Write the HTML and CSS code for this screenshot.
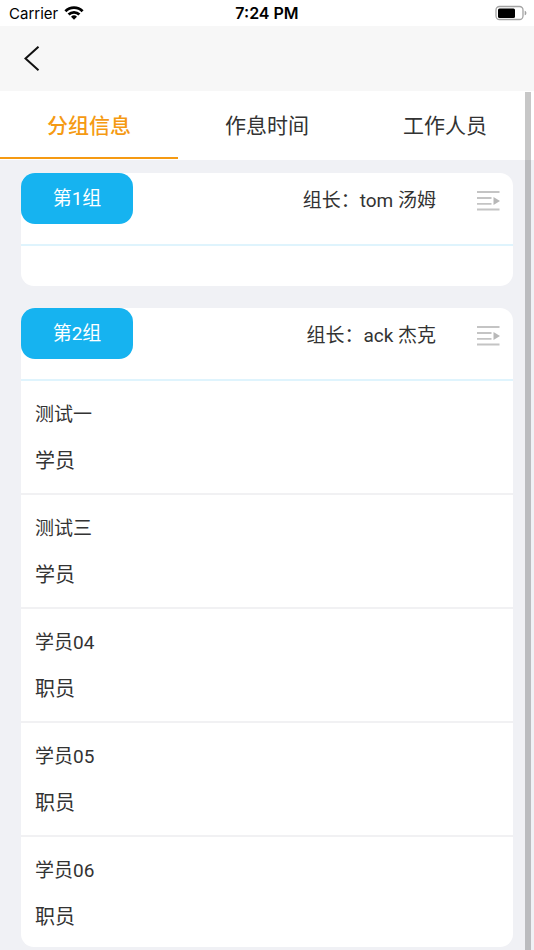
FILE: index.html
```html
<!DOCTYPE html>
<html lang="zh-CN">
<head>
    <meta charset="UTF-8" />
    <meta name="viewport" content="width=device-width, initial-scale=1.0"/>
    <title>分组信息</title>
    <link rel="stylesheet" href="styles.css">
</head>
<body>
    <!-- Status bar -->
    <div class="status-bar">
        <div class="carrier">
            <span>Carrier</span>
            <svg width="20" height="14" viewBox="0 0 20 14" fill="none" stroke="#000" stroke-width="2.8">
                <path d="M1.4 5.2a12.2 12.2 0 0 1 17.2 0"/>
                <path d="M4.6 8.6a7.6 7.6 0 0 1 10.8 0"/>
                <path d="M10 13.8l-3-3a4.3 4.3 0 0 1 6 0z" fill="#000" stroke="none"/>
            </svg>
        </div>
        <div class="time">7:24 PM</div>
        <div class="battery">
            <svg width="32" height="16" viewBox="0 0 32 16">
                <rect x="1" y="1.500" width="27" height="13" rx="3.500" fill="#fff" stroke="#a3a3a3" stroke-width="1.3"/>
                <rect x="3" y="3.500" width="17" height="9.500" rx="1.500" fill="#000"/>
                <path d="M29.700 5.700c1.200.4 1.700 1.200 1.700 2.300s-.5 1.900-1.700 2.300z" fill="#a3a3a3"/>
            </svg>
        </div>
    </div>

    <!-- Navigation -->
    <header class="nav-bar">
        <button type="button" class="back" aria-label="返回">
            <svg width="18" height="26" viewBox="0 0 18 26" fill="none" stroke="#111" stroke-width="2">
                <path d="M14.500.7L1.500 12.500l13 11.800"/>
            </svg>
        </button>
    </header>

    <nav class="tabs">
        <button type="button" class="tab active">分组信息</button>
        <button type="button" class="tab">作息时间</button>
        <button type="button" class="tab">工作人员</button>
    </nav>

    <main class="groups">
        <!-- Group 1 -->
        <section class="group">
            <div class="group-head">
                <h2 class="badge">第1组</h2>
                <p class="leader">组长：tom 汤姆</p>
                <button type="button" class="toggle" aria-label="展开">
                    <svg width="24" height="20" viewBox="0 0 24 20" stroke="#c4c4c4" stroke-width="1.8">
                        <path d="M1 1h22.500M1 7H15.500M1 12.800H15.500M1 18.500h22.500"/>
                        <path d="M17.500 6v8l6.500-4z" fill="#b8b8b8" stroke="none"/>
                    </svg>
                </button>
            </div>
            <div class="empty"></div>
        </section>

        <!-- Group 2 -->
        <section class="group">
            <div class="group-head">
                <h2 class="badge">第2组</h2>
                <p class="leader">组长：ack 杰克</p>
                <button type="button" class="toggle" aria-label="收起">
                    <svg width="24" height="20" viewBox="0 0 24 20" stroke="#c4c4c4" stroke-width="1.8">
                        <path d="M1 1h22.500M1 7H15.500M1 12.800H15.500M1 18.500h22.500"/>
                        <path d="M17.500 6v8l6.500-4z" fill="#b8b8b8" stroke="none"/>
                    </svg>
                </button>
            </div>
            <ul class="members">
                <li class="member">
                    <p class="name">测试一</p>
                    <p class="role">学员</p>
                </li>
                <li class="member">
                    <p class="name">测试三</p>
                    <p class="role">学员</p>
                </li>
                <li class="member">
                    <p class="name">学员04</p>
                    <p class="role">职员</p>
                </li>
                <li class="member">
                    <p class="name">学员05</p>
                    <p class="role">职员</p>
                </li>
                <li class="member">
                    <p class="name">学员06</p>
                    <p class="role">职员</p>
                </li>
            </ul>
        </section>
    </main>

    <div class="scroll-thumb"></div>
</body>
</html>
```

FILE: styles.css
```css
* {
    box-sizing: border-box;
}

html {
    scrollbar-width: none;
}

body {
    margin: 0;
    background-color: #f0f1f5;
    color: #333;
    font-family: Roboto, "Noto Sans CJK SC", sans-serif;
    font-size: 19px;
}

h2, p, ul {
    margin: 0;
    padding: 0;
    font-size: inherit;
    font-weight: normal;
}

button {
    margin: 0;
    padding: 0;
    border: none;
    background: none;
    color: inherit;
    font-family: inherit;
    cursor: pointer;
}

svg {
    display: block;
}

.status-bar {
    display: grid;
    grid-template-columns: 1fr auto 1fr;
    align-items: center;
    height: 26px;
    padding: 0 7px;
    background-color: #fff;
    color: #000;
    font-family: Inter, sans-serif;
    font-size: 15px;
}

.carrier {
    display: flex;
    align-items: center;
    gap: 6px;
    padding-left: 2px;
}

.time {
    font-size: 16px;
    font-weight: 600;
}

.battery {
    justify-self: end;
}

.nav-bar {
    display: flex;
    align-items: center;
    height: 65px;
    padding: 0 24px;
    background-color: #f7f7f7;
}

.tabs {
    display: flex;
    height: 69px;
    padding-bottom: 1px;
    background-color: #fff;
}

.tab {
    flex: 1;
    border-bottom: 2px solid transparent;
    font-size: 21px;
}

.tab.active {
    border-color: #f59a13;
    color: #f59a13;
    font-weight: 500;
}

.groups {
    display: flex;
    flex-direction: column;
    gap: 22px;
    padding: 13px 21px 0;
}

.group {
    border-radius: 13px;
    background-color: #fff;
}

.group-head {
    display: flex;
    align-items: flex-start;
    height: 73px;
    padding-right: 13px;
    border-bottom: 2px solid #dff4fd;
}

.badge {
    width: 112px;
    border-radius: 14px;
    background-color: #16b3f0;
    color: #fff;
    line-height: 51px;
    text-align: center;
}

.leader {
    flex: 1;
    padding-right: 40px;
    line-height: 56px;
    text-align: right;
}

.toggle {
    padding-top: 18px;
}

.empty {
    height: 40px;
}

.members {
    list-style: none;
}

.member {
    padding: 20px 14px 18px;
    border-bottom: 2px solid #f1f1f3;
    line-height: 28px;
}

.member:last-child {
    padding-bottom: 16px;
    border-bottom: none;
}

.role {
    margin-top: 18px;
    font-size: 20px;
}

.scroll-thumb {
    position: fixed;
    top: 92px;
    right: 3px;
    bottom: 0;
    width: 6px;
    background-color: rgba(0, 0, 0, 0.22);
}
```
